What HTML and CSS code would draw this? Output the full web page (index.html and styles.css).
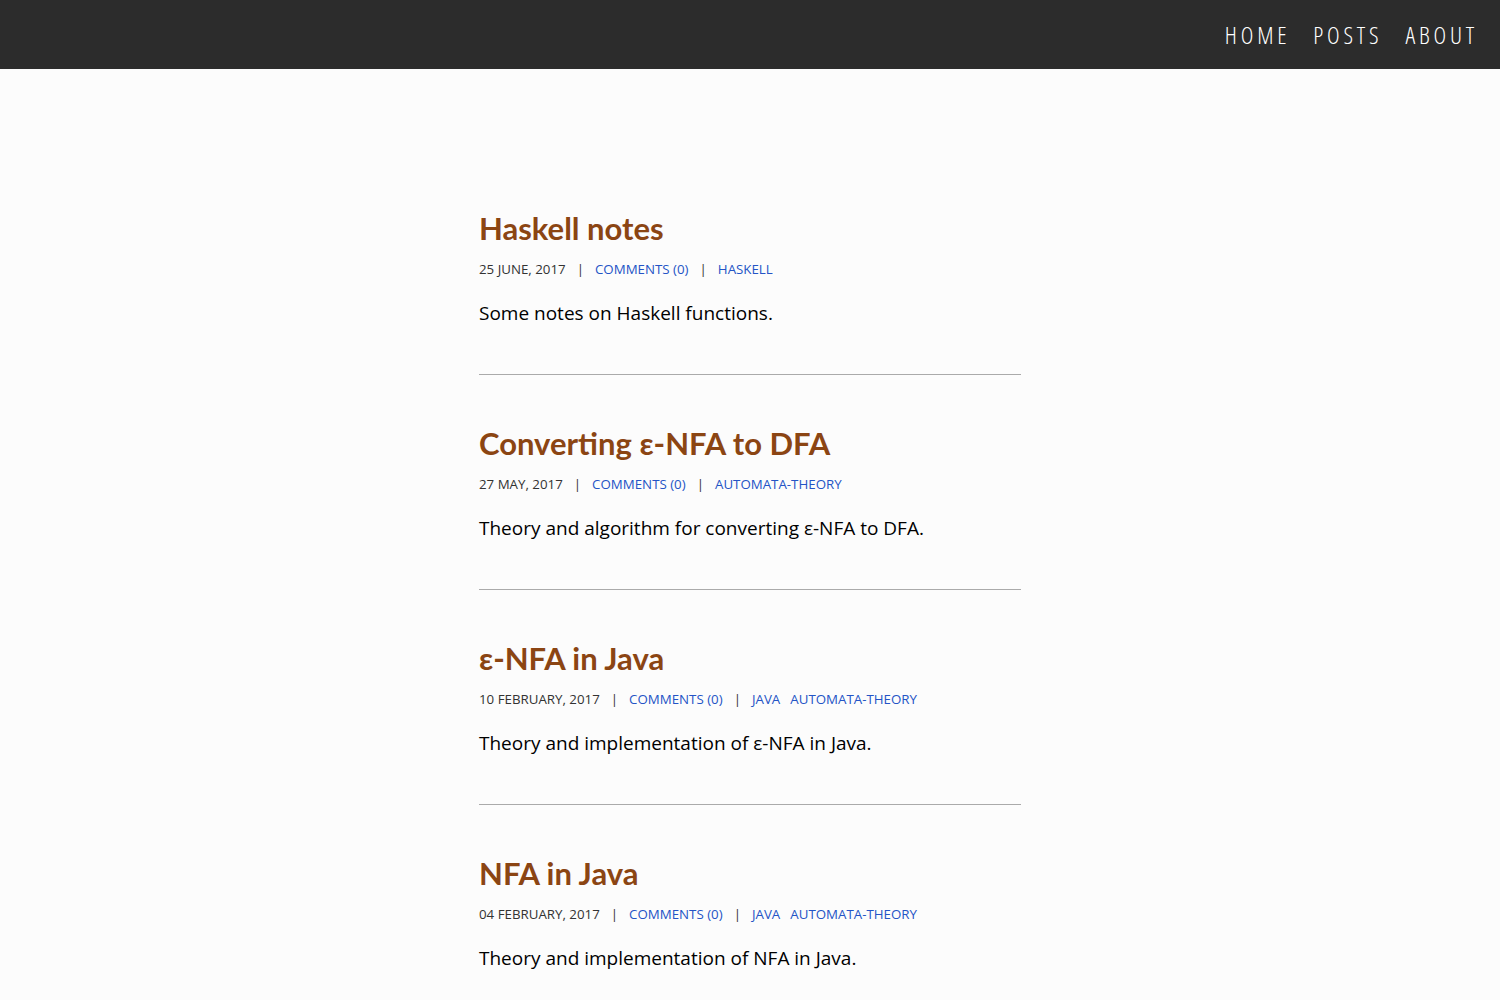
FILE: index.html
```html
<!DOCTYPE html>
<html>
<head>
<meta charset="utf-8">
<link rel="stylesheet" href="styles.css">
</head>
<body>
<header class="topbar">
  <nav class="nav">
    <a href="#">HOME</a>
    <a href="#">POSTS</a>
    <a href="#">ABOUT</a>
  </nav>
</header>
<main class="content">
  <article class="post">
    <h2 class="post-title">Haskell notes</h2>
    <div class="meta"><span>25 JUNE, 2017</span><span class="sep">|</span><a href="#">COMMENTS (0)</a><span class="sep">|</span><a href="#">HASKELL</a></div>
    <p class="summary">Some notes on Haskell functions.</p>
  </article>
  <hr class="rule">
  <article class="post">
    <h2 class="post-title">Converting ε-NFA to DFA</h2>
    <div class="meta"><span>27 MAY, 2017</span><span class="sep">|</span><a href="#">COMMENTS (0)</a><span class="sep">|</span><a href="#">AUTOMATA-THEORY</a></div>
    <p class="summary">Theory and algorithm for converting ε-NFA to DFA.</p>
  </article>
  <hr class="rule">
  <article class="post">
    <h2 class="post-title">ε-NFA in Java</h2>
    <div class="meta"><span>10 FEBRUARY, 2017</span><span class="sep">|</span><a href="#">COMMENTS (0)</a><span class="sep">|</span><a href="#">JAVA</a><a class="tag2" href="#">AUTOMATA-THEORY</a></div>
    <p class="summary">Theory and implementation of ε-NFA in Java.</p>
  </article>
  <hr class="rule">
  <article class="post">
    <h2 class="post-title">NFA in Java</h2>
    <div class="meta"><span>04 FEBRUARY, 2017</span><span class="sep">|</span><a href="#">COMMENTS (0)</a><span class="sep">|</span><a href="#">JAVA</a><a class="tag2" href="#">AUTOMATA-THEORY</a></div>
    <p class="summary">Theory and implementation of NFA in Java.</p>
  </article>
</main>
</body>
</html>
```

FILE: styles.css
```css
html, body {
  margin: 0;
  padding: 0;
  background: #fcfcfc;
}
body {
  font-family: "Open Sans", sans-serif;
  color: #000;
}
.topbar {
  height: 69px;
  background: #2c2c2c;
  display: flex;
  justify-content: flex-end;
  align-items: center;
}
.nav {
  display: flex;
  gap: 23px;
  padding-right: 22px;
}
.nav a {
  color: #fff;
  text-decoration: none;
  font-family: "Open Sans", sans-serif;
  font-weight: 300;
  font-stretch: 75%;
  font-size: 24px;
  letter-spacing: 3.8px;
}
.content {
  width: 542px;
  margin: 0 auto;
  padding-top: 139px;
}
.post-title {
  font-family: Lato, sans-serif;
  font-weight: 700;
  font-size: 31px;
  color: #8b4513;
  margin: 0;
  line-height: 40px;
}
.meta {
  font-size: 13.3px;
  color: #333;
  margin-top: 12px;
  line-height: 18px;
}
.meta a {
  color: #2454c6;
  text-decoration: none;
}
.sep {
  margin: 0 11px;
}
.tag2 {
  margin-left: 10px;
}
.summary {
  font-size: 19px;
  margin: 21px 0 0;
  line-height: 28px;
}
.rule {
  border: 0;
  border-top: 1px solid #aaa;
  margin: 47px 0 48px;
}
```
